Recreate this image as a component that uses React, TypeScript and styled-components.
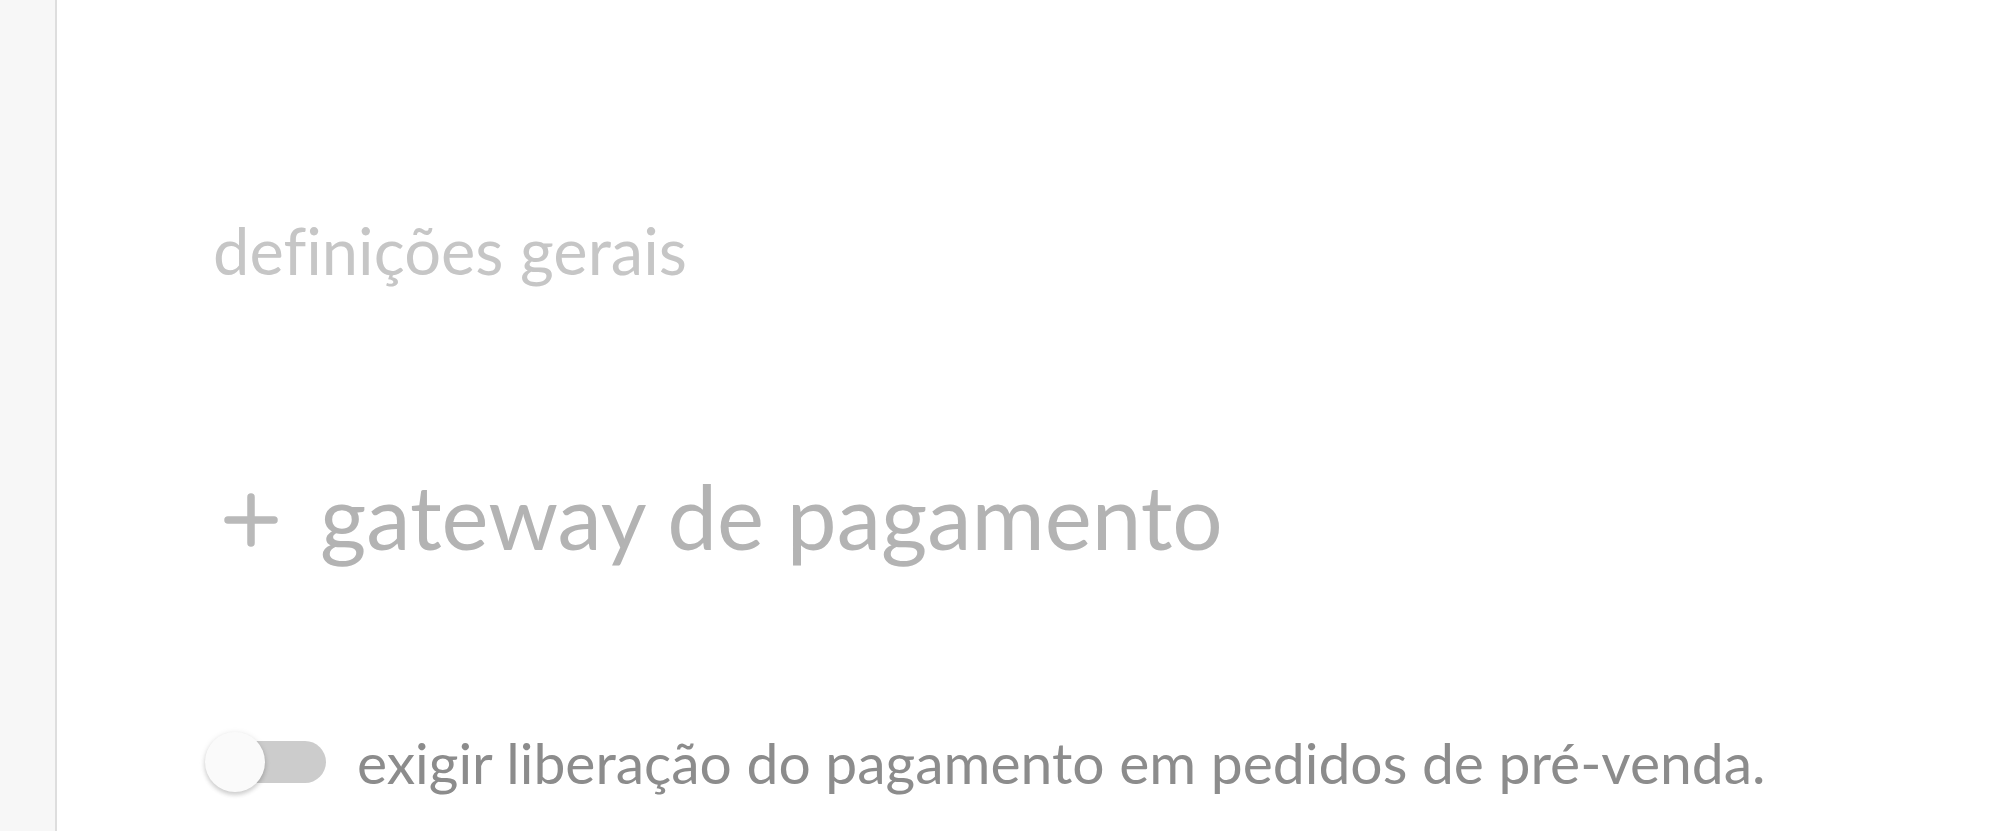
import React, { useState } from "react";
import styled, { createGlobalStyle } from "styled-components";

const Global = createGlobalStyle`
  html, body { margin: 0; padding: 0; background: #ffffff; }
  body { font-family: "Lato", "Noto Sans", sans-serif; font-variant-ligatures: none; }
  #root { min-height: 831px; }
`;

const Page = styled.div`
  display: flex;
  min-height: 831px;
  background: #ffffff;
`;

const Sidebar = styled.aside`
  width: 55px;
  flex: none;
  background: #f7f7f7;
  border-right: 2px solid #dedede;
`;

const Main = styled.main`
  flex: 1;
  padding: 211px 0 0 156px;
  display: flex;
  flex-direction: column;
  align-items: flex-start;
`;

const SectionTitle = styled.h2`
  margin: 0;
  font-family: "Lato", sans-serif;
  font-variant-ligatures: none;
  font-weight: 400;
  font-size: 65px;
  line-height: 1.2;
  color: #c6c6c6;
`;

const AddButton = styled.button`
  margin-top: 174px;
  display: flex;
  align-items: center;
  gap: 42px;
  padding: 0 0 0 11px;
  background: none;
  border: none;
  cursor: pointer;
  font-family: "Lato", sans-serif;
  font-variant-ligatures: none;
  font-weight: 400;
  font-size: 89px;
  line-height: 1.2;
  color: #b3b3b3;
`;

const PlusIcon = styled.svg`
  width: 54px;
  height: 54px;
  flex: none;
  margin-top: 8px;
`;

const ToggleRow = styled.label`
  margin-top: 158px;
  margin-left: -8px;
  display: flex;
  align-items: center;
  gap: 31px;
  cursor: pointer;
`;

const Switch = styled.span`
  position: relative;
  width: 121px;
  height: 62px;
  flex: none;
  display: block;
`;

const Track = styled.span<{ $on: boolean }>`
  position: absolute;
  left: 7px;
  right: 0;
  top: 10px;
  height: 42px;
  border-radius: 21px;
  background: ${(p) => (p.$on ? "#9fc4ea" : "#cccccc")};
`;

const Knob = styled.span<{ $on: boolean }>`
  position: absolute;
  top: 1px;
  left: ${(p) => (p.$on ? "61px" : "0")};
  width: 60px;
  height: 60px;
  border-radius: 50%;
  background: #fafafa;
  box-shadow: 0 3px 4px rgba(0, 0, 0, 0.14), 0 1px 6px rgba(0, 0, 0, 0.1);
  transition: left 0.2s;
`;

const HiddenInput = styled.input`
  display: none;
`;

const ToggleLabel = styled.span`
  font-family: "Lato", sans-serif;
  font-variant-ligatures: none;
  font-weight: 400;
  font-size: 57px;
  line-height: 1.2;
  color: #8c8c8c;
`;

export default function App() {
  const [on, setOn] = useState(false);
  return (
    <>
      <Global />
      <Page>
        <Sidebar />
        <Main>
          <SectionTitle>definições gerais</SectionTitle>
          <AddButton type="button">
            <PlusIcon viewBox="0 0 54 54">
              <path
                d="M27 4 V50 M4 27 H50"
                stroke="#b9b9b9"
                strokeWidth="7.5"
                strokeLinecap="round"
                fill="none"
              />
            </PlusIcon>
            gateway de pagamento
          </AddButton>
          <ToggleRow>
            <HiddenInput
              type="checkbox"
              checked={on}
              onChange={(e) => setOn(e.target.checked)}
            />
            <Switch>
              <Track $on={on} />
              <Knob $on={on} />
            </Switch>
            <ToggleLabel>exigir liberação do pagamento em pedidos de pré-venda.</ToggleLabel>
          </ToggleRow>
        </Main>
      </Page>
    </>
  );
}
